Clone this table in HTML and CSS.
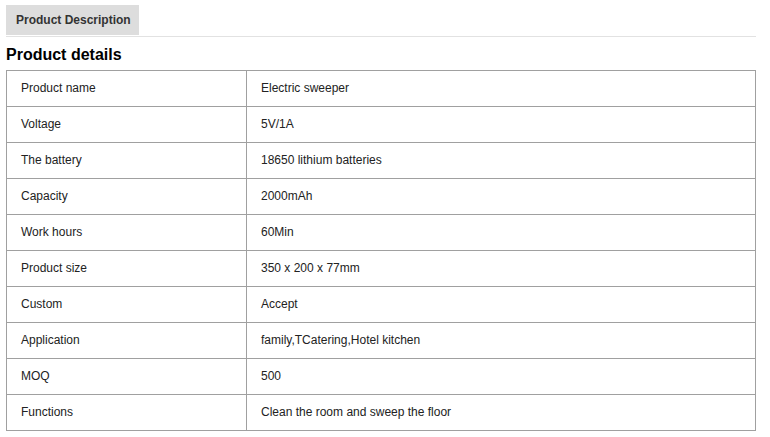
FILE: index.html
```html
<!DOCTYPE html>
<html>
<head>
<meta charset="utf-8">
<link rel="stylesheet" href="styles.css">
</head>
<body>
<div class="wrap">
  <div class="tabs">
    <div class="tab">Product Description</div>
  </div>
  <h2 class="title">Product details</h2>
  <table class="spec">
    <tr><td class="k">Product name</td><td>Electric sweeper</td></tr>
    <tr><td class="k">Voltage</td><td>5V/1A</td></tr>
    <tr><td class="k">The battery</td><td>18650 lithium batteries</td></tr>
    <tr><td class="k">Capacity</td><td>2000mAh</td></tr>
    <tr><td class="k">Work hours</td><td>60Min</td></tr>
    <tr><td class="k">Product size</td><td>350 x 200 x 77mm</td></tr>
    <tr><td class="k">Custom</td><td>Accept</td></tr>
    <tr><td class="k">Application</td><td>family,TCatering,Hotel kitchen</td></tr>
    <tr><td class="k">MOQ</td><td>500</td></tr>
    <tr><td class="k">Functions</td><td>Clean the room and sweep the floor</td></tr>
  </table>
</div>
</body>
</html>
```
FILE: styles.css
```css
html, body { margin: 0; padding: 0; background: #fff; }
body { font-family: "Liberation Sans", Arial, sans-serif; color: #000; }
.wrap { padding: 5px 0 0 6px; width: 750px; }
.tabs { border-bottom: 1px solid #e2e2e2; height: 31px; display: flex; }
.tab {
  background: #dddddd;
  height: 30px;
  width: 133px;
  box-sizing: border-box;
  padding-left: 10px;
  line-height: 30px;
  font-size: 12px;
  font-weight: bold;
  color: #333;
}
.title {
  margin: 0;
  padding-top: 9px;
  height: 24px;
  font-size: 16px;
  line-height: 18px;
  font-weight: bold;
  color: #000;
}
.spec {
  border-collapse: collapse;
  width: 750px;
  font-size: 12px;
  color: #222;
}
.spec td {
  border: 1px solid #a0a0a0;
  height: 36px;
  padding: 0 0 2px 14px;
  box-sizing: border-box;
  vertical-align: middle;
}
.spec td.k { width: 240px; }
```
